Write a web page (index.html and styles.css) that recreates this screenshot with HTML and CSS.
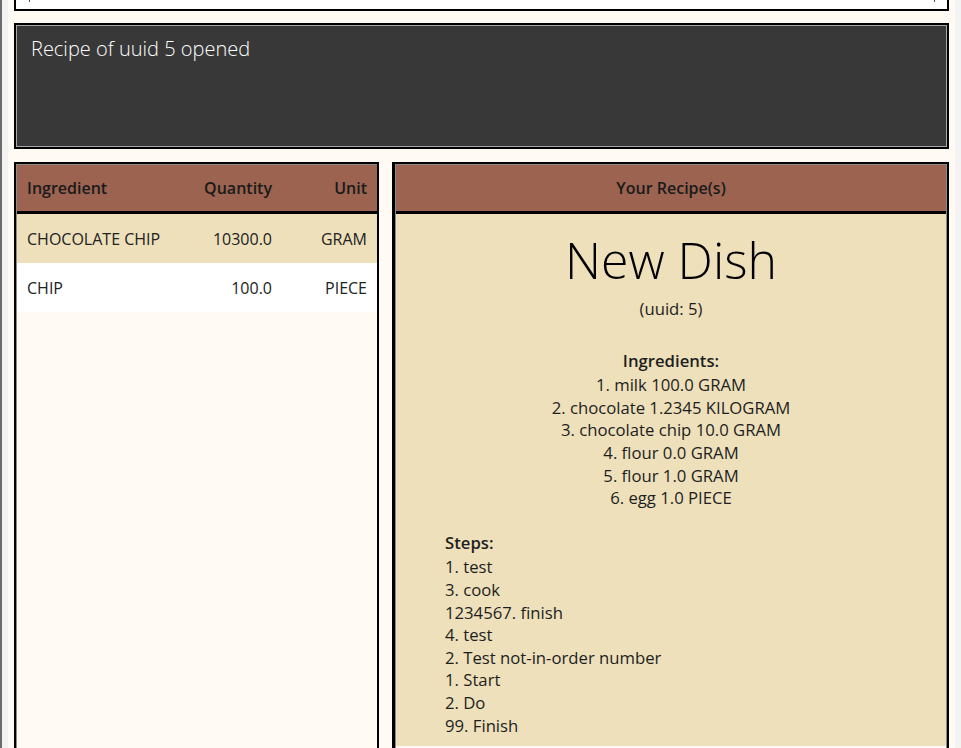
FILE: index.html
```html
<!DOCTYPE html>
<html>
<head>
<meta charset="utf-8">
<link rel="stylesheet" href="styles.css">
</head>
<body>
<div class="app">
  <div class="command-box">
    <div class="command-field"></div>
  </div>
  <div class="result-box">
    <div class="result-inner">Recipe of uuid 5 opened</div>
  </div>
  <div class="panels">
    <div class="panel inventory">
      <div class="panel-inner">
        <div class="table-head">
          <span class="col-name">Ingredient</span>
          <span class="col-qty">Quantity</span>
          <span class="col-unit">Unit</span>
        </div>
        <div class="table-row alt">
          <span class="col-name">CHOCOLATE CHIP</span>
          <span class="col-qty">10300.0</span>
          <span class="col-unit">GRAM</span>
        </div>
        <div class="table-row">
          <span class="col-name">CHIP</span>
          <span class="col-qty">100.0</span>
          <span class="col-unit">PIECE</span>
        </div>
      </div>
    </div>
    <div class="panel recipes">
      <div class="panel-inner">
        <div class="recipe-head">Your Recipe(s)</div>
        <div class="recipe-body">
          <h1 class="dish-name">New Dish</h1>
          <div class="uuid">(uuid: 5)</div>
          <div class="ingredients">
            <div class="label">Ingredients:</div>
            <div>1. milk 100.0 GRAM</div>
            <div>2. chocolate 1.2345 KILOGRAM</div>
            <div>3. chocolate chip 10.0 GRAM</div>
            <div>4. flour 0.0 GRAM</div>
            <div>5. flour 1.0 GRAM</div>
            <div>6. egg 1.0 PIECE</div>
          </div>
          <div class="steps">
            <div class="label">Steps:</div>
            <div>1. test</div>
            <div>3. cook</div>
            <div>1234567. finish</div>
            <div>4. test</div>
            <div>2. Test not-in-order number</div>
            <div>1. Start</div>
            <div>2. Do</div>
            <div>99. Finish</div>
          </div>
        </div>
      </div>
    </div>
  </div>
</div>
</body>
</html>
```
FILE: styles.css
```css
* { box-sizing: border-box; }
html, body { margin: 0; padding: 0; height: 100%; overflow: hidden; }
body {
  background: #f3f3f3;
  border-left: 2px solid #6c6c6c;
  font-family: "Segoe UI", "Open Sans", "Noto Sans", sans-serif;
  font-size: 16px;
  color: #222;
}
.app {
  margin: 0 6px;
  height: 100%;
  background: #fffaf3;
  padding: 0 6px;
  display: flex;
  flex-direction: column;
  overflow: hidden;
}
.command-box {
  flex-shrink: 0;
  margin-top: -20px;
  height: 31px;
  border: 2px solid #000;
  background: #fff;
  padding: 0 12px 0 13px;
}
.command-field {
  height: 20px;
  border-left: 1px solid #555;
  border-right: 1px solid #555;
}
.result-box {
  flex-shrink: 0;
  margin-top: 12px;
  height: 126px;
  border: 2px solid #000;
}
.result-inner {
  height: 100%;
  border: 1px solid #a8a8a8;
  background: #383838;
  color: #fff;
  font-weight: 300;
  font-size: 20px;
  padding: 9px 14px;
}
.panels {
  margin-top: 13px;
  flex: 1;
  min-height: 0;
  display: flex;
  gap: 13px;
  align-items: stretch;
  overflow: hidden;
}
.panel {
  border: 2px solid #000;
  border-bottom: none;
  flex-shrink: 0;
}
.panel-inner {
  height: 100%;
  border-left: 1px solid #8a8a8a;
  border-top: 1px solid #8a8a8a;
}
.inventory {
  width: 365px;
}
.recipes {
  flex: 1;
  border-left-width: 3px;
}
.recipes .panel-inner {
  border-right: 1px solid #8a8a8a;
}
.table-head, .recipe-head {
  height: 49px;
  background: #9b6350;
  border-bottom: 3px solid #000;
  font-weight: 600;
  color: #1a1a1a;
}
.table-head, .table-row {
  display: flex;
  align-items: center;
  padding: 0 10px 0 10px;
}
.table-row { height: 49px; background: #fff; color: #222; }
.table-row.alt { background: #ede0bb; }
.col-name { flex: 1; }
.col-qty { width: 110px; text-align: right; }
.col-unit { width: 95px; text-align: right; }
.recipe-head {
  display: flex;
  align-items: center;
  justify-content: center;
}
.recipe-body {
  background: #ede0bb;
  height: 532px;
  text-align: center;
  font-size: 16.7px;
  line-height: 22.6px;
  color: #1e1e1e;
  padding-top: 16px;
}
.dish-name {
  margin: 0;
  font-weight: 300;
  font-size: 50px;
  line-height: 60px;
  color: #000;
}
.uuid { margin-top: 8px; }
.ingredients { margin-top: 29px; }
.label { font-weight: 600; margin-bottom: 2px; }
.steps {
  margin-top: 22px;
  text-align: left;
  padding-left: 49px;
}
```
